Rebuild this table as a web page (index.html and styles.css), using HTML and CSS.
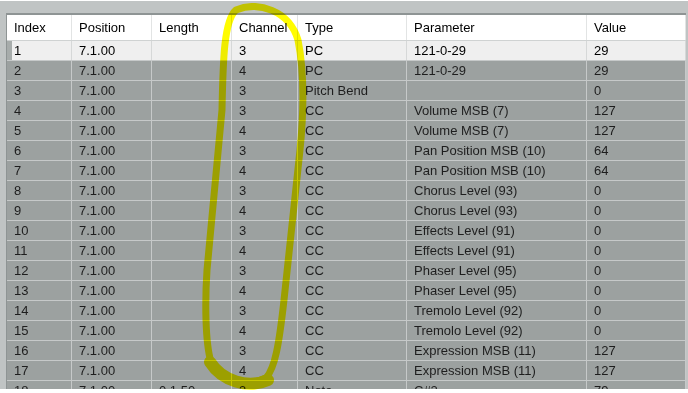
FILE: index.html
```html
<!DOCTYPE html>
<html lang="en">
<head>
  <meta charset="UTF-8">
  <title>Event List</title>
  <link rel="stylesheet" href="styles.css">
</head>
<body>
  <div class="frame">
    <div class="grid">
      <div class="row head">
        <div class="cell">Index</div><div class="cell">Position</div><div class="cell">Length</div><div class="cell">Channel</div><div class="cell">Type</div><div class="cell">Parameter</div><div class="cell">Value</div>
      </div>
      <div class="row selected">
        <div class="cell">1</div><div class="cell">7.1.00</div><div class="cell"></div><div class="cell">3</div><div class="cell">PC</div><div class="cell">121-0-29</div><div class="cell">29</div>
      </div>
      <div class="row">
        <div class="cell">2</div><div class="cell">7.1.00</div><div class="cell"></div><div class="cell">4</div><div class="cell">PC</div><div class="cell">121-0-29</div><div class="cell">29</div>
      </div>
      <div class="row">
        <div class="cell">3</div><div class="cell">7.1.00</div><div class="cell"></div><div class="cell">3</div><div class="cell">Pitch Bend</div><div class="cell"></div><div class="cell">0</div>
      </div>
      <div class="row">
        <div class="cell">4</div><div class="cell">7.1.00</div><div class="cell"></div><div class="cell">3</div><div class="cell">CC</div><div class="cell">Volume MSB (7)</div><div class="cell">127</div>
      </div>
      <div class="row">
        <div class="cell">5</div><div class="cell">7.1.00</div><div class="cell"></div><div class="cell">4</div><div class="cell">CC</div><div class="cell">Volume MSB (7)</div><div class="cell">127</div>
      </div>
      <div class="row">
        <div class="cell">6</div><div class="cell">7.1.00</div><div class="cell"></div><div class="cell">3</div><div class="cell">CC</div><div class="cell">Pan Position MSB (10)</div><div class="cell">64</div>
      </div>
      <div class="row">
        <div class="cell">7</div><div class="cell">7.1.00</div><div class="cell"></div><div class="cell">4</div><div class="cell">CC</div><div class="cell">Pan Position MSB (10)</div><div class="cell">64</div>
      </div>
      <div class="row">
        <div class="cell">8</div><div class="cell">7.1.00</div><div class="cell"></div><div class="cell">3</div><div class="cell">CC</div><div class="cell">Chorus Level (93)</div><div class="cell">0</div>
      </div>
      <div class="row">
        <div class="cell">9</div><div class="cell">7.1.00</div><div class="cell"></div><div class="cell">4</div><div class="cell">CC</div><div class="cell">Chorus Level (93)</div><div class="cell">0</div>
      </div>
      <div class="row">
        <div class="cell">10</div><div class="cell">7.1.00</div><div class="cell"></div><div class="cell">3</div><div class="cell">CC</div><div class="cell">Effects Level (91)</div><div class="cell">0</div>
      </div>
      <div class="row">
        <div class="cell">11</div><div class="cell">7.1.00</div><div class="cell"></div><div class="cell">4</div><div class="cell">CC</div><div class="cell">Effects Level (91)</div><div class="cell">0</div>
      </div>
      <div class="row">
        <div class="cell">12</div><div class="cell">7.1.00</div><div class="cell"></div><div class="cell">3</div><div class="cell">CC</div><div class="cell">Phaser Level (95)</div><div class="cell">0</div>
      </div>
      <div class="row">
        <div class="cell">13</div><div class="cell">7.1.00</div><div class="cell"></div><div class="cell">4</div><div class="cell">CC</div><div class="cell">Phaser Level (95)</div><div class="cell">0</div>
      </div>
      <div class="row">
        <div class="cell">14</div><div class="cell">7.1.00</div><div class="cell"></div><div class="cell">3</div><div class="cell">CC</div><div class="cell">Tremolo Level (92)</div><div class="cell">0</div>
      </div>
      <div class="row">
        <div class="cell">15</div><div class="cell">7.1.00</div><div class="cell"></div><div class="cell">4</div><div class="cell">CC</div><div class="cell">Tremolo Level (92)</div><div class="cell">0</div>
      </div>
      <div class="row">
        <div class="cell">16</div><div class="cell">7.1.00</div><div class="cell"></div><div class="cell">3</div><div class="cell">CC</div><div class="cell">Expression MSB (11)</div><div class="cell">127</div>
      </div>
      <div class="row">
        <div class="cell">17</div><div class="cell">7.1.00</div><div class="cell"></div><div class="cell">4</div><div class="cell">CC</div><div class="cell">Expression MSB (11)</div><div class="cell">127</div>
      </div>
      <div class="row">
        <div class="cell">18</div><div class="cell">7.1.00</div><div class="cell">0.1.50</div><div class="cell">3</div><div class="cell">Note</div><div class="cell">C#2</div><div class="cell">79</div>
      </div>
    </div>
  </div>

  <!-- hand-drawn marker loop around the channel column -->
  <svg class="marker" width="688" height="393" viewBox="0 0 688 393">
    <path d="M222 110 C223 60 224 20 236 10 C258 1 289 10 298 40 C304 70 304 110 300 150 L284 300 C279 345 275 368 266 378 C248 387 222 380 211 362 C205 342 205 300 207 270 Z"
          fill="none" stroke="#fffc00" stroke-width="7" stroke-linejoin="round"/>
    <path d="M210 362 C222 381 248 389 268 380" fill="none" stroke="#fffc00" stroke-width="12" stroke-linecap="round"/>
  </svg>
</body>
</html>
```

FILE: styles.css
```css
body {
  margin: 0;
  background: #fff;
  font-family: "Liberation Sans", Arial, sans-serif;
  font-size: 13px;
  color: #1e1e1e;
}

.frame {
  height: 376px;
  overflow: hidden;
  background: #c0c4c4;
  border-top: 1px solid #fff;
  padding: 12px 0 0 6px;
}

.grid {
  border-top: 2px solid #8e9494;
  border-left: 1px solid #8e9494;
  width: 679px;
}

.row {
  display: grid;
  grid-template-columns: 65px 80px 80px 66px 109px 180px 99px;
  height: 20px;
  background: #9ca1a0;
  border-bottom: 1px solid #c6c9c9;
  box-sizing: border-box;
}

.cell {
  border-right: 1px solid #c6c9c9;
  padding-left: 7px;
  line-height: 19px;
  white-space: nowrap;
  overflow: hidden;
}

.row.head {
  height: 26px;
  background: #fff;
  color: #000;
  border-bottom-color: #cfd2d2;
}

.row.head .cell {
  line-height: 25px;
  border-right-color: #e2e4e4;
}

.row.selected {
  background: #efefef;
  color: #000;
}

.row.selected .cell {
  border-right-color: #d6d8d8;
}

.row.selected .cell:first-child {
  box-shadow: inset 5px 0 #a7acab;
}

.marker {
  position: absolute;
  top: 0;
  left: 0;
  mix-blend-mode: multiply;
  pointer-events: none;
}
```
